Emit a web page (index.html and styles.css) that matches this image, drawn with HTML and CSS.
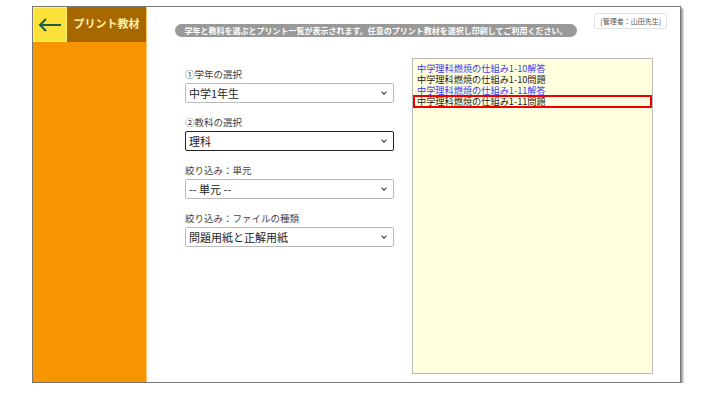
FILE: index.html
```html
<!DOCTYPE html>
<html lang="ja">
<head>
    <meta charset="UTF-8">
    <meta name="viewport" content="width=device-width, initial-scale=1.0">
    <title>プリント教材</title>
    <link rel="stylesheet" href="styles.css">
</head>
<body>
    <div class="window">
        <div class="side">
            <div class="side-head">
                <div class="back">
                    <svg width="24" height="14" viewBox="0 0 24 14">
                        <path d="M23 7H2M8 1L2 7l6 6" fill="none" stroke="#1b5e48" stroke-width="2"/>
                    </svg>
                </div>
                <h3 class="title">プリント教材</h3>
            </div>
        </div>

        <div class="main">
            <div class="top">
                <p class="notice">学年と教科を選ぶとプリント一覧が表示されます。任意のプリント教材を選択し印刷してご利用ください。</p>
                <div class="admin">[管理者：山田先生]</div>
            </div>

            <div class="content">
                <form class="filters">
                    <label>①学年の選択</label>
                    <div class="select">
                        <select>
                            <option>中学1年生</option>
                        </select>
                    </div>
                    <label>②教科の選択</label>
                    <div class="select">
                        <select class="focus">
                            <option>理科</option>
                        </select>
                    </div>
                    <label>絞り込み：単元</label>
                    <div class="select">
                        <select>
                            <option>-- 単元 --</option>
                        </select>
                    </div>
                    <label>絞り込み：ファイルの種類</label>
                    <div class="select">
                        <select>
                            <option>問題用紙と正解用紙</option>
                        </select>
                    </div>
                </form>

                <ul class="list">
                    <li class="link">中学理科燃焼の仕組み1-10解答</li>
                    <li>中学理科燃焼の仕組み1-10問題</li>
                    <li class="link">中学理科燃焼の仕組み1-11解答</li>
                    <li class="selected">中学理科燃焼の仕組み1-11問題</li>
                </ul>
            </div>
        </div>
    </div>
</body>
</html>
```

FILE: styles.css
```css
body{
    margin: 0;
    background: white;
    font-family: "Noto Sans CJK JP", "Noto Sans", sans-serif;
}

.window{
    display: flex;
    width: 647px;
    height: 375px;
    margin: 6px 0 0 32px;
    border: 1px solid #777;
    box-shadow: 2px 2px 2px #999;
    background: white;
}

/* 왼쪽 오렌지 메뉴 */
.side{
    width: 113px;
    background: #f69500;
    border-right: 1px solid #ffc46a;
}

.side-head{
    display: flex;
    height: 35px;
    background: #a86800;
}

.back{
    width: 32px;
    height: 33px;
    background: #fbe13a;
    border: 1px solid #fff07a;
    display: flex;
    justify-content: center;
    align-items: center;
}

.title{
    margin: 0;
    flex: 1;
    color: #fff0a8;
    font-size: 11px;
    font-weight: bold;
    line-height: 33px;
    text-align: center;
}

.main{
    flex: 1;
    padding: 0 13px 0 28px;
}

.top{
    display: flex;
    justify-content: space-between;
    align-items: flex-start;
}

.notice{
    margin: 17px 0 0;
    width: 402px;
    height: 13px;
    background: #999;
    border-radius: 7px;
    color: white;
    font-size: 8px;
    font-weight: bold;
    line-height: 13px;
    text-align: center;
    white-space: nowrap;
    overflow: hidden;
}

.admin{
    margin-top: 6px;
    padding: 0 5px;
    height: 14px;
    border: 1px solid #e2e2e2;
    border-radius: 3px;
    color: #555;
    font-size: 7px;
    line-height: 14px;
}

.content{
    display: flex;
    gap: 18px;
    margin-top: 21px;
    padding-left: 10px;
}

.filters{
    width: 209px;
    display: flex;
    flex-direction: column;
    padding-top: 10px;
}

.filters label{
    font-size: 9.5px;
    color: #444;
    line-height: 12px;
    margin-bottom: 3px;
}

/* 작은 화살표는 after 로 그림 */
.select{
    position: relative;
    margin-bottom: 13px;
}

.select::after{
    content: "";
    position: absolute;
    right: 8px;
    top: 7px;
    width: 3px;
    height: 3px;
    border-right: 1.5px solid #333;
    border-bottom: 1.5px solid #333;
    transform: rotate(45deg);
    pointer-events: none;
}

.select select{
    appearance: none;
    display: block;
    width: 100%;
    height: 20px;
    padding: 0 3px;
    border: 1px solid #bbb;
    border-radius: 2px;
    background: white;
    color: #222;
    font-family: inherit;
    font-size: 11px;
}

.select select.focus{
    border-color: #222;
}

.list{
    width: 239px;
    height: 310px;
    margin: 0;
    padding: 4px 0 0;
    list-style: none;
    background: #ffffdf;
    border: 1px solid #bbb;
}

.list li{
    padding: 0 4px;
    font-size: 9.2px;
    line-height: 11px;
    color: #222;
}

.list li.link{
    color: #3a3af0;
}

.list li.selected{
    margin-top: -1px;
    border: 2px solid #e00;
    line-height: 9px;
    padding-left: 2px;
}
```
